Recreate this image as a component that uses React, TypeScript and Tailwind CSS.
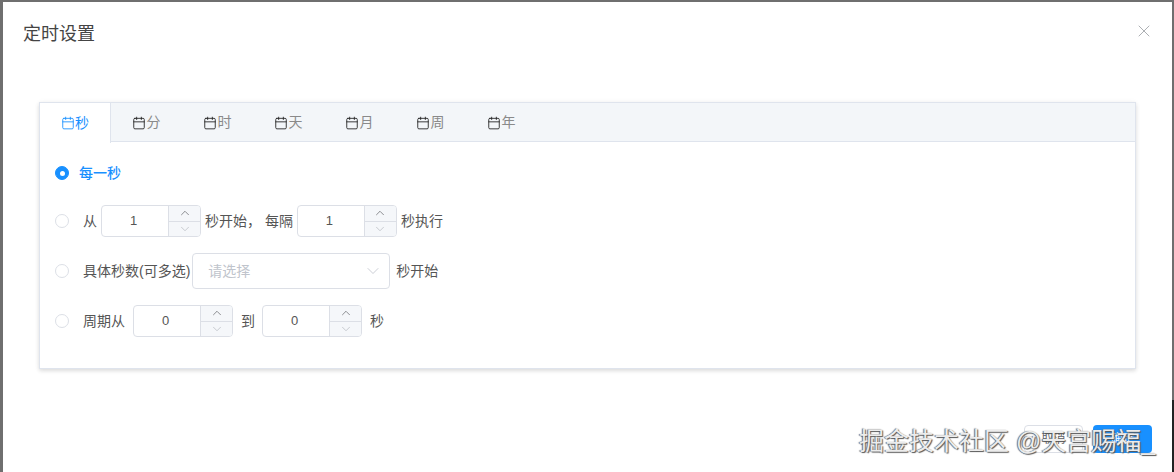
import React from 'react';
import { X, ChevronUp, ChevronDown, Calendar } from 'lucide-react';

const tabs = ['秒', '分', '时', '天', '月', '周', '年'];

function Radio({ checked }: { checked?: boolean }) {
  return (
    <span
      className={`flex h-[14px] w-[14px] shrink-0 items-center justify-center rounded-full border ${
        checked ? 'border-[#1890ff] bg-[#1890ff]' : 'border-[#dcdfe6] bg-white'
      }`}
    >
      {checked && <span className="h-[5px] w-[5px] rounded-full bg-white" />}
    </span>
  );
}

function NumberInput({ value }: { value: number }) {
  return (
    <div className="flex h-8 w-[100px] shrink-0 overflow-hidden rounded border border-[#dcdfe6] bg-white">
      <div className="flex flex-1 items-center justify-center pr-[3px] text-[13px] text-[#555]">{value}</div>
      <div className="flex w-[32px] flex-col border-l border-[#dcdfe6] bg-[#f5f7fa]">
        <div className="flex flex-1 items-center justify-center border-b border-[#dcdfe6] text-[#606266]">
          <ChevronUp size={14} strokeWidth={1.2} />
        </div>
        <div className="flex flex-1 items-center justify-center text-[#b4b8bf]">
          <ChevronDown size={14} strokeWidth={1.2} />
        </div>
      </div>
    </div>
  );
}

export default function App() {
  return (
    <div
      className="relative h-[472px] w-[1174px] overflow-hidden bg-[#6f6f6f] pl-[3px] pr-[2px] pt-[2px] text-[14px] text-[#555]"
      style={{ fontFamily: '"Liberation Sans", "Noto Sans CJK SC", sans-serif' }}
    >
      <div className="absolute bottom-0 right-0 top-[400px] w-[2px] bg-[#222]" />
      <div className="relative h-[470px] bg-white">
        <div className="flex items-center justify-between pl-5 pr-[18px] pt-[20px]">
          <span className="text-[18px] leading-[24px] text-[#444]">定时设置</span>
          <X size={20} strokeWidth={0.9} className="-mt-[6px] text-[#909399]" />
        </div>

        <div className="ml-9 mr-9 mt-[56px] h-[267px] border border-[#dfe4ed] shadow-[0_2px_4px_0_rgba(0,0,0,0.12),0_0_6px_0_rgba(0,0,0,0.04)]">
          <div className="flex h-[39px] border-b border-[#dfe4ed] bg-[#f3f6f9]">
            {tabs.map((tab, i) => (
              <div
                key={tab}
                className={`flex h-[39px] w-[71px] items-center justify-center ${
                  i === 0
                    ? 'h-[40px] border-r border-[#dfe4ed] bg-white text-[#1890ff]'
                    : 'pr-[1px] text-[#8a8a8a]'
                }`}
              >
                <Calendar
                  size={14}
                  strokeWidth={1.5}
                  className={i === 0 ? 'text-[#1890ff]' : 'mr-[1px] text-[#222]'}
                />
                {tab}
              </div>
            ))}
          </div>

          <div className="pl-[15px] pt-[15px]">
            <div className="flex h-8 items-center">
              <Radio checked />
              <span className="ml-[10px] font-medium text-[#1890ff]">每一秒</span>
            </div>
            <div className="mt-[16px] flex h-8 items-center">
              <Radio />
              <span className="ml-[14px] mr-1">从</span>
              <NumberInput value={1} />
              <span className="ml-[4px] mr-1">秒开始， 每隔</span>
              <NumberInput value={1} />
              <span className="ml-[4px]">秒执行</span>
            </div>
            <div className="mt-[16px] flex h-9 items-center">
              <Radio />
              <span className="ml-[14px] mr-[2px]">具体秒数(可多选)</span>
              <div className="flex h-9 w-[198px] items-center justify-between rounded border border-[#dcdfe6] pl-[15px] pr-[6px] text-[#c0c4cc]">
                <span>请选择</span>
                <ChevronDown size={20} strokeWidth={1} />
              </div>
              <span className="ml-[6px]">秒开始</span>
            </div>
            <div className="mt-[16px] flex h-8 items-center">
              <Radio />
              <span className="ml-[14px] mr-2">周期从</span>
              <NumberInput value={0} />
              <span className="ml-2 mr-[7px]">到</span>
              <NumberInput value={0} />
              <span className="ml-2">秒</span>
            </div>
          </div>
        </div>

        <div className="mr-5 mt-[56px] flex justify-end gap-[10px]">
          <button className="h-7 w-[59px] rounded border border-[#dcdfe6] bg-white text-[12px] text-[#606266]">取消</button>
          <button className="h-7 w-[59px] rounded bg-[#1890ff] text-[12px] text-white">确定</button>
        </div>

        {/* watermark */}
        <div
          className="absolute left-[856px] top-[422px] whitespace-nowrap text-[25px] leading-[34px] text-[#ececec]"
          style={{ textShadow: '1px 1px 1px #555, -1px 0 1px #666' }}
        >
          掘金技术社区 @天宫赐福_
        </div>
      </div>
    </div>
  );
}
